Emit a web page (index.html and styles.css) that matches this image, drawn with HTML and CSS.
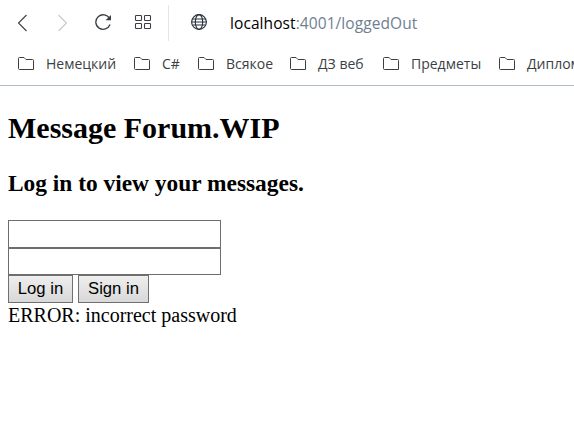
FILE: index.html
```html
<!DOCTYPE html>
<html lang="ru">
<head>
<meta charset="utf-8">
<title>Message Forum</title>
<link rel="stylesheet" href="styles.css">
</head>
<body>
<svg class="defs" width="0" height="0"><symbol id="folder" viewBox="0 0 17 14"><path d="M1.500 .5H6L8 2.500H14.500Q15.500 2.500 15.500 3.500V12.500H1.500Q.5 12.500 .5 11.500V1.500Q.5 .5 1.500 .5Z"/></symbol></svg>
<header class="chrome">
  <div class="toolbar">
    <svg class="icon back" viewBox="0 0 18 18"><path d="M12.500 1L4.500 9L12.500 17"/></svg>
    <svg class="icon forward" viewBox="0 0 18 18"><path d="M4.500 1L12.500 9L4.500 17"/></svg>
    <svg class="icon reload" viewBox="0 0 18 18"><path d="M15.500 4.500A7.300 7.300 0 1 0 16 10.500"/><path class="solid" d="M17 1V6.300H11.500Z"/></svg>
    <svg class="icon tiles" viewBox="0 0 18 18"><rect x="1.500" y="1.500" width="6" height="5" rx=".7"/><rect x="10.500" y="1.500" width="6" height="5" rx=".7"/><rect x="1.500" y="9.500" width="6" height="5" rx=".7"/><rect x="10.500" y="9.500" width="6" height="5" rx=".7"/></svg>
    <span class="divider"></span>
    <svg class="icon globe" viewBox="0 0 18 18"><circle cx="9" cy="8" r="7.400"/><ellipse cx="9" cy="8" rx="3.700" ry="7.400"/><path d="M2.500 5H15.500M1.600 8H16.400M2.500 11H15.500"/></svg>
    <div class="url"><span class="host">localhost</span>:4001/loggedOut</div>
  </div>
  <nav class="bookmarks">
    <a class="bookmark long"><svg><use href="#folder"/></svg><span>Немецкий</span></a>
    <a class="bookmark short"><svg><use href="#folder"/></svg><span>C#</span></a>
    <a class="bookmark mid"><svg><use href="#folder"/></svg><span>Всякое</span></a>
    <a class="bookmark mid wide"><svg><use href="#folder"/></svg><span>ДЗ веб</span></a>
    <a class="bookmark long"><svg><use href="#folder"/></svg><span>Предметы</span></a>
    <a class="bookmark long"><svg><use href="#folder"/></svg><span>Диплом</span></a>
  </nav>
</header>
<main>
  <h2>Message Forum.WIP</h2>
  <h3>Log in to view your messages.</h3>
  <form>
    <input class="login" type="text">
    <input class="password" type="password">
    <div class="actions"><button class="log" type="button">Log in</button><button class="sign" type="button">Sign in</button></div>
  </form>
  <div class="error">ERROR: incorrect password</div>
</main>
</body>
</html>
```
FILE: styles.css
```css
* { box-sizing: border-box; }
body { margin: 0; background: #fff; color: #000; overflow: hidden; font: 20px/24px "Liberation Serif", serif; }
.defs { position: absolute; }
.chrome { height: 86px; overflow: hidden; border-bottom: 1px solid #b0bcc6; font-family: "Open Sans", "Noto Sans", sans-serif; }
.toolbar { height: 46px; display: flex; align-items: center; padding-left: 14px; }
.icon { width: 18px; height: 18px; flex: none; fill: none; stroke: #3b3f45; stroke-width: 1.1; }
.forward { margin-left: 22px; stroke: #c6c8ca; }
.reload { margin-left: 22px; stroke-width: 1.3; }
.reload .solid { fill: #3b3f45; stroke: none; }
.tiles { margin-left: 22px; }
.divider { width: 1px; height: 36px; margin-left: 16px; background: #e3e5e7; }
.globe { margin-left: 21px; stroke: #26313d; }
.url { margin-left: 22px; font-size: 15.5px; line-height: 20px; letter-spacing: .08px; color: #6f8091; white-space: nowrap; }
.host { color: #000; }
.bookmarks { display: flex; height: 36px; padding-left: 18px; align-items: center; }
.bookmark { display: flex; flex: none; align-items: center; gap: 11px; font-size: 14px; line-height: 20px; color: #3b3f45; white-space: nowrap; }
.bookmark svg { width: 17px; height: 14px; flex: none; fill: none; stroke: #3b3f45; }
.long { width: 116px; }
.short { width: 64px; }
.mid { width: 92px; }
.wide { width: 93px; }
main { padding: 25px 8px 0; }
h2 { margin: 0; font-size: 30px; line-height: 34px; }
h3 { margin: 25px 0 23px; font-size: 23.4px; line-height: 27px; }
form { display: flex; flex-direction: column; align-items: flex-start; }
input { width: 213px; height: 28px; margin: 0; padding: 1px 2px; border: 1px solid #6d6d6d; border-radius: 0; background: #fff; }
.password { height: 27px; }
.actions { display: flex; gap: 5px; }
button { height: 28px; padding: 0 0 1px; border: 1px solid #707070; border-radius: 0; background: linear-gradient(#eee, #d8d8d8); color: #000; font: 16.67px "Liberation Sans", sans-serif; }
.log { width: 65px; }
.sign { width: 71px; }
```
